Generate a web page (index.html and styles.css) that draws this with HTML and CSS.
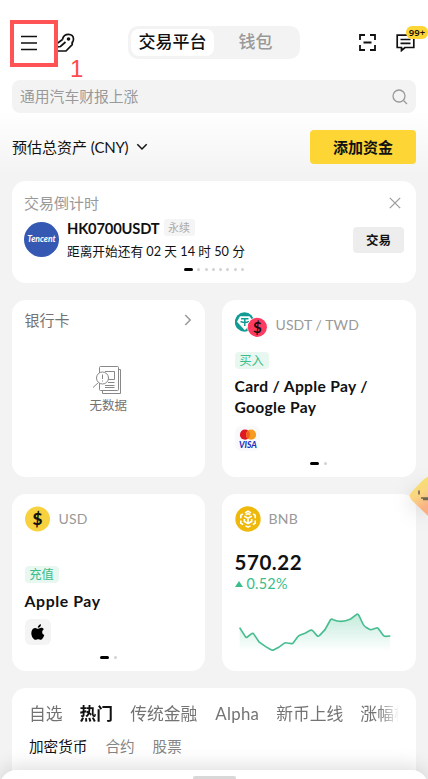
FILE: index.html
```html
<!DOCTYPE html>
<html lang="zh-CN">
<head>
<meta charset="utf-8">
<title>交易平台</title>
<link rel="stylesheet" href="styles.css">
</head>
<body>
<div class="app">
  <header class="top">
    <div class="menu-box">
      <svg class="burger" width="16" height="16" viewBox="0 0 16 16"><path d="M0 1.500h16M0 8h16M0 14.500h16"/></svg>
      <span class="step">1</span>
    </div>
    <svg class="hand" width="18" height="20" viewBox="0 0 18 20"><path d="M0 18h9l6.200-6.300V8.500M0 10.500L5.500 6.500M0 14l3.500-.5L8.500 9M5.500 6.500C6 3.500 8.500 1.300 11.600 1.300c3 0 4.900 2.100 4.900 4.700 0 2-1 3.500-1.700 5"/><circle class="dot" cx="11.500" cy="6" r="1.800"/></svg>
    <nav class="segment"><span class="seg on">交易平台</span><span class="seg">钱包</span></nav>
    <svg class="scan" width="17" height="17" viewBox="0 0 17 17"><path d="M1 6V1h5M11 1h5v5M16 11v5h-5M6 16H1v-5M4.500 8.500h8"/></svg>
    <div class="chat">
      <svg width="20" height="18" viewBox="0 0 20 18"><path d="M1.200 1.200h16.600v12.300H9l-3.500 3v-3H1.200zM4.500 5.500h10M4.500 9.300h10"/></svg>
      <span class="count">99+</span>
    </div>
  </header>

  <div class="search"><span>通用汽车财报上涨</span>
    <svg width="16" height="16" viewBox="0 0 16 16"><circle cx="7" cy="7" r="6"/><path d="M11.500 11.500l3.500 3.500"/></svg>
  </div>

  <div class="assets"><span class="assets-name">预估总资产 <span class="cny">(CNY)</span></span>
    <svg width="12" height="8" viewBox="0 0 12 8"><path d="M1.300 1.300L6 6l4.700-4.700"/></svg>
    <button class="add">添加资金</button>
  </div>

  <section class="card countdown">
    <div class="row between"><span class="label">交易倒计时</span>
      <svg class="close" width="12" height="12" viewBox="0 0 12 12"><path d="M.8.8l10.400 10.400M11.200.8L.8 11.200"/></svg></div>
    <div class="row event">
      <div class="tencent">Tencent</div>
      <div class="event-text">
        <div class="row"><b class="pair">HK0700USDT</b><span class="perp">永续</span></div>
        <div class="timer">距离开始还有 02 天 14 时 50 分</div>
      </div>
      <button class="trade">交易</button>
    </div>
    <div class="dots wide"><i class="on"></i><i></i><i></i><i></i><i></i><i></i><i></i><i></i></div>
  </section>

  <main class="grid">
    <section class="card tile">
      <div class="row between bank"><span class="label dark">银行卡</span>
        <svg class="arrow" width="8" height="12" viewBox="0 0 8 12"><path d="M1.200 1l5 5-5 5"/></svg></div>
      <div class="empty">
        <svg width="30" height="30" viewBox="0 0 30 30"><path d="M7.500 8V2.500Q7.500 1.500 8.500 1.500h17Q26.500 1.500 26.500 2.500v22q0 1-1 1h-17Q7.500 25.500 7.500 24.500V18M26.500 4.500h2v24h-18v-3M13 6.500h9.500v8H16M16 17.500h6.500M13 20.500h9.500M13 22.500h9.500M6.500 17.500L1 22.500"/><circle class="lens" cx="10.500" cy="13" r="6"/><path d="M10.500 9.500v4.500M10.500 15.500v1"/></svg>
        <span>无数据</span>
      </div>
    </section>

    <section class="card tile">
      <div class="row coin">
        <svg class="duo" width="33" height="26" viewBox="0 0 33 26"><circle cx="9.500" cy="10" r="9.700" fill="#129b94"/><path d="M5 4.300h9.500l4 5.400-8.700 8.600L2 9.700z" fill="#fff"/><path d="M6 6.700h7.500M9.800 6.700V14M5.500 9.500q4.300 2 8.600 0" fill="none" stroke="#129b94" stroke-width="1.500"/><circle cx="22.300" cy="15.300" r="10.200" fill="#fff"/><circle cx="22.300" cy="15.300" r="9.600" fill="#ff3a61"/><text x="22.300" y="20.600" class="dollar">$</text></svg>
        <span class="ticker usdt">USDT / TWD</span>
      </div>
      <span class="tag buy">买入</span>
      <h2 class="two">Card / Apple Pay /<br>Google Pay</h2>
      <svg class="pay" width="25" height="25" viewBox="0 0 25 25"><rect width="25" height="25" rx="6" fill="#f9f9fb"/><circle cx="10" cy="8.700" r="5.100" fill="#df1926"/><circle cx="16" cy="8.700" r="5.100" fill="#f59b20"/><path d="M13 4.600a5.100 5.100 0 0 1 0 8.200 5.100 5.100 0 0 1 0-8.200" fill="#f26322"/><text x="12.900" y="22" class="visa">VISA</text></svg>
      <div class="dots"><i class="on"></i><i></i></div>
    </section>

    <section class="card tile">
      <div class="row coin">
        <svg width="26" height="26" viewBox="0 0 26 26"><circle cx="12.500" cy="13" r="12.500" fill="#f7d23e"/><text x="12.500" y="19" class="dollar big">$</text></svg>
        <span class="ticker usd">USD</span>
      </div>
      <span class="tag deposit">充值</span>
      <h2 class="single">Apple Pay</h2>
      <svg class="pay apple" width="26" height="26" viewBox="0 0 26 26"><rect width="26" height="26" rx="6" fill="#f4f4f4"/><path d="M16 5.200c.2 1.800-1.300 3.500-3.200 3.500-.2-1.700 1.500-3.400 3.200-3.500M13.200 9.700c.8 0 1.700-.9 3-.9 1 0 2 .5 2.600 1.400-2.400 1.500-2 4.800.5 5.800-.6 1.900-1.900 4.800-3.600 4.800-1 0-1.300-.6-2.500-.6s-1.600.6-2.500.6C8.500 20.800 6.300 17.400 6.300 14c0-3.200 2-5.100 4-5.100 1.200 0 2.100.8 2.900.8"/></svg>
      <div class="dots"><i class="on"></i><i></i></div>
    </section>

    <section class="card tile">
      <div class="row coin">
        <svg width="26" height="26" viewBox="0 0 26 26"><circle cx="13" cy="13" r="12.700" fill="#efb90b"/><path class="bnb" d="M10 6.900l3-1.700 3 1.700M18 8l2.200 1.300v2.900M20.200 14.500v2.700L17.800 18.600M15.500 19.900L13 21.200l-2.500-1.300M8.200 18.600l-2.400-1.400v-2.700M5.800 12.200V9.300L8 8M9.300 10.200l3.700 2 3.700-2M13 12.200v4.500M9.300 13v2.500l3.700 2 3.700-2V13M10.700 8.800L13 7.600l2.300 1.200"/></svg>
        <span class="ticker bnbname">BNB</span>
      </div>
      <div class="price">570.22</div>
      <div class="change"><i></i>0.52%</div>
      <svg class="chart" width="160" height="50" viewBox="60 360 480 150">
        <defs><linearGradient id="g" x1="0" y1="0" x2="0" y2="1"><stop offset="0" stop-color="#39bd8b" stop-opacity=".3"/><stop offset="1" stop-color="#39bd8b" stop-opacity="0"/></linearGradient></defs>
        <path fill="url(#g)" d="M77 428L96 458Q117 438 120 446L135 471L155 485L175 496L194 487L214 473L235 475L253 453L273 445L293 435L313 454L333 434L352 402Q382 415 410 402L431 387L450 422L470 434L491 428L510 453H528V500H77z"/>
        <path class="line" d="M77 428L94 455Q96 459 100 456L113 446Q117 443 120 448L135 471L155 485L171 494Q175 497 180 494L194 487L210 475Q214 472 220 474L233 476Q236 476 238 473L250 457Q253 453 257 451L273 445L289 436Q293 434 297 438L309 452Q313 456 317 451L333 434L349 405Q352 400 358 404Q382 415 410 402L427 389Q431 385 435 392L447 417Q450 423 456 427L466 433Q470 435 476 433L487 429Q491 427 494 432L507 450Q510 454 514 454L529 453"/>
      </svg>
    </section>
  </main>

  <section class="card market">
    <div class="tabs"><span>自选</span><b>热门</b><span>传统金融</span><span class="alpha">Alpha</span><span>新币上线</span><span>涨幅榜</span></div>
    <div class="subtabs"><span class="on">加密货币</span><span>合约</span><span>股票</span></div>
  </section>

  <div class="sheet"><i></i></div>
  <svg class="mascot" width="20" height="42" viewBox="0 0 20 42">
    <defs><linearGradient id="m" x1="0" y1="0" x2=".3" y2="1"><stop offset=".15" stop-color="#f7e268"/><stop offset=".55" stop-color="#fad583"/><stop offset=".95" stop-color="#f9b184"/></linearGradient></defs>
    <path fill="url(#m)" d="M20 1.500Q17 3 13 7L3.500 17Q0 21 3.500 25L20 41z"/>
    <path class="smile" d="M11 15.500v4M13 23h7M15 24.500h5"/>
  </svg>
</div>
</body>
</html>
```

FILE: styles.css
```css
* { box-sizing: border-box; }
body { margin: 0; font-family: Lato, "Noto Sans CJK SC", sans-serif; color: #111; }
svg { display: block; flex: none; fill: none; }
button { border: 0; padding: 0; font: inherit; color: #111; }
.app { position: relative; width: 428px; height: 779px; overflow: hidden; padding: 20px 12px 0; background: linear-gradient(#fff 0, #fff 112px, #f3f3f3 175px); }
.row { display: flex; align-items: center; }
.between { justify-content: space-between; }
.card { background: #fff; border-radius: 14px; }

.top { display: flex; align-items: center; height: 46px; margin-left: -2px; padding-bottom: 1px; }
.menu-box { position: relative; z-index: 1; flex: none; width: 48px; height: 47px; margin-top: 2px; border: 4px solid #ff5356; display: flex; align-items: center; padding: 0 0 2px 7px; }
.burger { stroke: #111; stroke-width: 1.6; }
.step { position: absolute; left: 56px; top: 31px; font: 24px/28px "Liberation Sans", sans-serif; color: #ff4a50; }
.hand { margin-left: -1px; stroke: #111; stroke-width: 1.7; }
.hand .dot { fill: #111; stroke: none; }
.segment { display: flex; align-items: center; width: 172px; height: 33px; margin-left: 53px; background: #f3f3f3; border-radius: 10px; padding: 3px; font-size: 17px; }
.seg { flex: 1; text-align: center; line-height: 25px; height: 27px; color: #999; font-weight: 500; }
.seg.on { flex: 0 0 83px; color: #111; background: #fff; border-radius: 8px; }
.scan { margin-left: 59px; stroke: #111; stroke-width: 1.8; }
.chat { position: relative; margin-left: 20px; stroke: #111; stroke-width: 1.7; }
.count { position: absolute; left: 10px; top: -8px; width: 22px; height: 13px; border-radius: 6px; background: #fdd535; font: 600 9.500px/13px "Noto Sans", sans-serif; text-align: center; }

.search { display: flex; align-items: center; justify-content: space-between; height: 33px; margin-top: 14px; padding: 0 8px; border-radius: 8px; background: #f3f3f3; color: #999; font-size: 14.800px; }
.search span { padding-bottom: 2px; }
.search svg { stroke: #999; stroke-width: 1.3; }
.assets { display: flex; align-items: center; height: 34px; margin-top: 17px; font-size: 15px; }
.assets-name { padding-bottom: 2px; }
.cny { letter-spacing: -.3px; }
.assets svg { margin-left: 8px; stroke: #111; stroke-width: 1.5; }
.add { margin-left: auto; width: 106px; height: 34px; padding-bottom: 2px; border-radius: 4px; background: #fdd535; font-weight: 700; font-size: 15px; }

.countdown { height: 102px; margin-top: 17px; padding: 11px 12px 0; }
.label { color: #999; font-size: 15px; line-height: 22px; }
.label.dark { color: #737373; }
.close { stroke: #999; stroke-width: 1.2; margin-right: 3px; }
.tencent { flex: none; width: 35px; height: 35px; border-radius: 50%; background: #3559b2; color: #fff; text-align: center; font: italic 700 8.600px/34px Lato, sans-serif; }
.event { height: 46px; margin-top: 2px; }
.event-text { margin-left: 8px; flex: 1; }
.pair { font-size: 14.700px; line-height: 20px; letter-spacing: -.15px; }
.perp { margin-left: 4px; width: 31px; height: 17px; border-radius: 3px; background: #f5f5f5; color: #aaa; font-size: 11px; line-height: 17px; text-align: center; }
.timer { font-size: 12.700px; line-height: 20px; margin-top: 3px; white-space: nowrap; }
.trade { width: 51px; height: 26px; margin-top: 2px; padding-bottom: 1px; border-radius: 4px; background: #ededed; font-weight: 700; font-size: 12.500px; }
.dots { display: flex; justify-content: center; gap: 5px; }
.dots i { width: 3px; height: 3px; border-radius: 2px; background: #d2d2d2; }
.dots i.on { width: 9px; background: #000; }
.wide { margin-top: 6px; gap: 4.300px; }

.grid { display: grid; grid-template-columns: 193px 194px; grid-template-rows: 177px 177px; gap: 17px; margin-top: 17px; }
.tile { padding: 12px 13px 0 12.500px; display: flex; flex-direction: column; align-items: flex-start; }
.bank { width: 100%; margin-top: -3px; }
.arrow { stroke: #999; stroke-width: 1.5; }
.empty { align-self: center; display: flex; flex-direction: column; align-items: center; margin-top: 34px; color: #737373; font-size: 12.500px; line-height: 18px; }
.empty svg { stroke: #888; stroke-width: 1; margin: 0 2px 1px 0; }
.lens { fill: #fff; }
.empty span { margin-top: 1px; }
.coin { height: 26px; }
.ticker { margin-left: 8px; color: #999; font-size: 14px; line-height: 20px; white-space: nowrap; }
.usdt { letter-spacing: .1px; }
.usd, .bnbname { letter-spacing: .2px; }
.dollar { font: 700 15px Lato, sans-serif; fill: #111; text-anchor: middle; }
.dollar.big { font-size: 17px; font-weight: 900; }
.tag { width: 34px; height: 17px; border-radius: 4px; background: #e8f8f1; color: #39bd8b; font-size: 12.300px; line-height: 17px; text-align: center; }
.buy { margin-top: 14px; }
.deposit { margin-top: 34px; }
h2 { margin: 7px 0 0; font-size: 15.300px; line-height: 21px; white-space: nowrap; }
h2.two { font-size: 15.600px; letter-spacing: .32px; }
h2.single { font-size: 15.800px; letter-spacing: .6px; }
.pay { margin-top: 8px; }
.apple path { fill: #000; }
.visa { font: italic 900 8.500px Lato, sans-serif; fill: #1b35bd; text-anchor: middle; }
.tile .dots { align-self: center; margin-top: auto; margin-bottom: 12px; }
.bnb { stroke: #fff; stroke-width: 1.6; }
.price { margin-top: 18px; font: 700 20.500px/24px Lato, sans-serif; letter-spacing: .55px; }
.change { display: flex; align-items: center; gap: 4px; margin-top: 0; color: #39bd8b; font-size: 14.400px; line-height: 20px; letter-spacing: .25px; }
.change i { border: 4.500px solid transparent; border-top: 0; border-bottom: 6px solid #39bd8b; }
.chart { margin: 11px 0 0 -.5px; }
.line { stroke: #48bd90; stroke-width: 5; }

.market { height: 110px; margin-top: 17px; padding: 14px 17px 0; }
.tabs { display: flex; gap: 17px; overflow: hidden; white-space: nowrap; color: #737373; font-size: 16.800px; line-height: 24px; -webkit-mask-image: linear-gradient(90deg, #000 calc(100% - 20px), transparent); mask-image: linear-gradient(90deg, #000 calc(100% - 20px), transparent); }
.tabs span, .tabs b { flex: none; }
.tabs b { color: #111; }
.tabs .alpha { letter-spacing: .3px; margin-left: 1px; }
.subtabs { display: flex; gap: 18px; margin-top: 11px; font-size: 14.600px; line-height: 20px; color: #858585; }
.subtabs .on { color: #111; }
.sheet { position: absolute; left: 0; right: 0; bottom: -20px; height: 29px; border-radius: 16px 16px 0 0; background: #fff; box-shadow: 0 -3px 20px rgba(0,0,0,.14); display: flex; justify-content: center; padding-top: 6px; }
.sheet i { width: 43px; height: 4px; border-radius: 2px; background: #d8d8d8; }
.mascot { position: absolute; right: 0; top: 475px; overflow: visible; filter: drop-shadow(-2px 4px 9px rgba(0,0,0,.1)); }
.smile { stroke: #6b6654; stroke-width: 1.6; }
```
